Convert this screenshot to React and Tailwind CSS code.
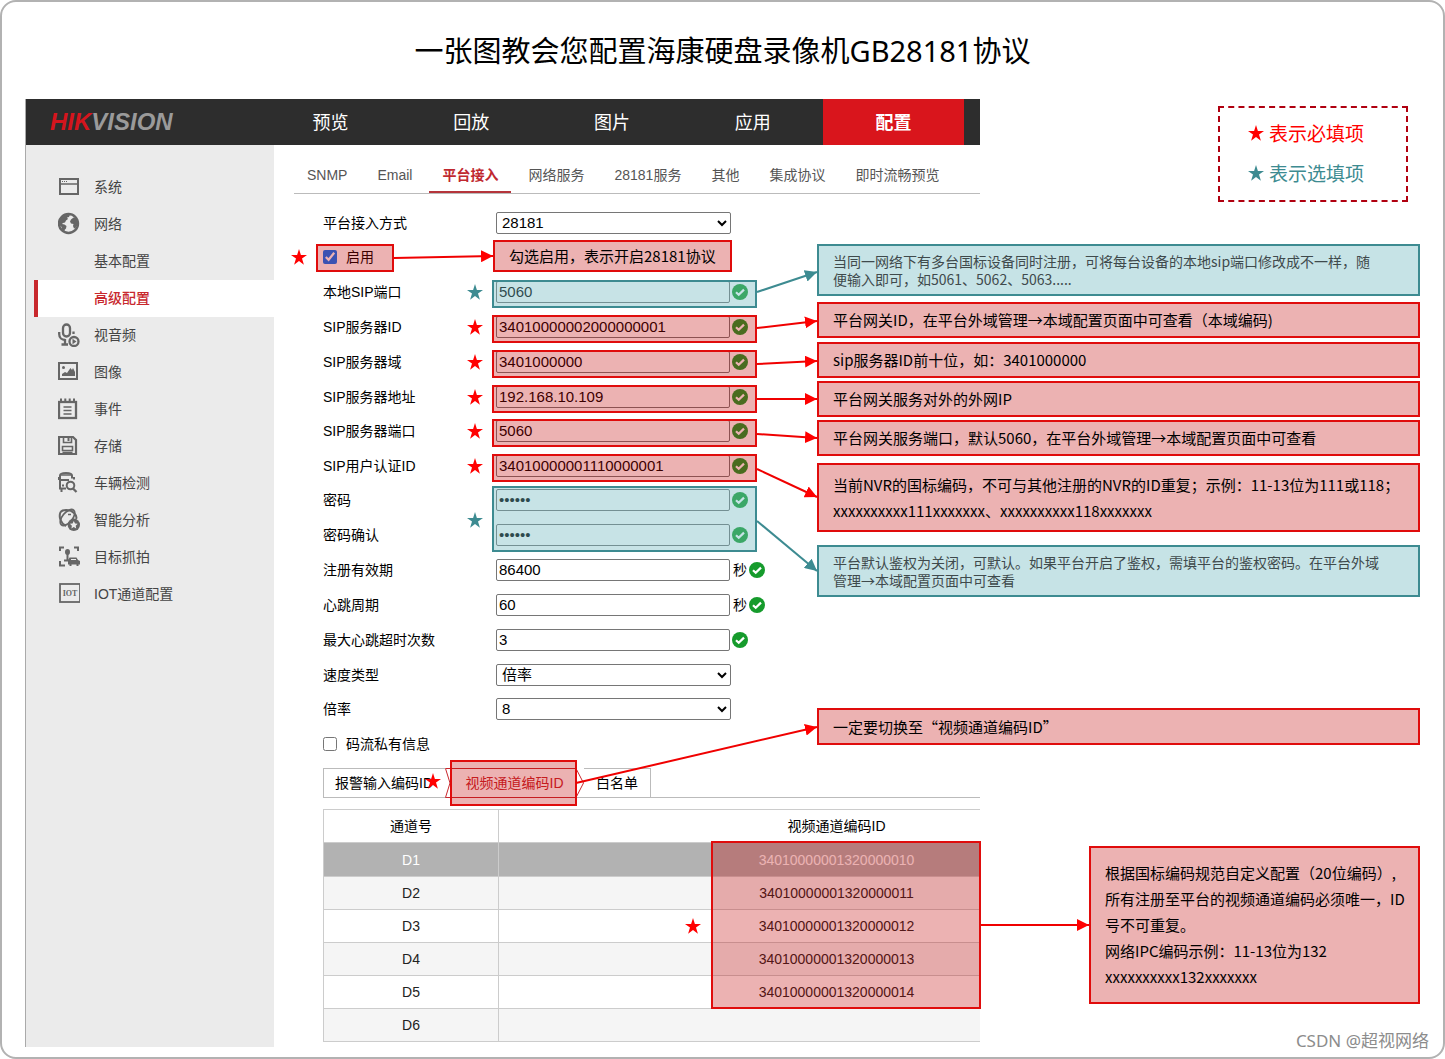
import React from "react";

const RED = "#f00000";
const TEAL = "#3d8b91";

const mainNav = ["预览", "回放", "图片", "应用", "配置"];

const subTabs = [
  "SNMP",
  "Email",
  "平台接入",
  "网络服务",
  "28181服务",
  "其他",
  "集成协议",
  "即时流畅预览",
];

const channels = [
  { name: "D1", code: "34010000001320000010" },
  { name: "D2", code: "34010000001320000011" },
  { name: "D3", code: "34010000001320000012" },
  { name: "D4", code: "34010000001320000013" },
  { name: "D5", code: "34010000001320000014" },
  { name: "D6", code: "" },
];

// lines between a highlighted field and its note
const arrows = [
  { from: [369, 159], to: [468, 157], kind: "required" },
  { from: [732, 193], to: [792, 173], kind: "optional" },
  { from: [732, 229], to: [792, 222], kind: "required" },
  { from: [732, 265], to: [792, 262], kind: "required" },
  { from: [732, 300], to: [792, 300], kind: "required" },
  { from: [732, 335], to: [792, 339], kind: "required" },
  { from: [732, 370], to: [792, 398], kind: "required" },
  { from: [732, 422], to: [792, 472], kind: "optional" },
  { from: [551, 684], to: [792, 628], kind: "required" },
  { from: [956, 826], to: [1064, 826], kind: "required" },
];

function Glyph({ children }) {
  return (
    <svg
      width="22"
      height="24"
      viewBox="0 0 22 24"
      fill="none"
      stroke="#666"
      strokeWidth="2"
      className="shrink-0"
      aria-hidden="true"
    >
      {children}
    </svg>
  );
}

const icons = {
  system: (
    <Glyph>
      <rect x="2" y="4" width="18" height="15" />
      <path d="M2 9h18" strokeWidth="1.5" />
      <path d="M4 6.500h1M6 6.500h1M8 6.500h1" strokeWidth="1" />
    </Glyph>
  ),
  network: (
    <Glyph>
      <circle cx="10.500" cy="11.500" r="9.500" strokeWidth="2.400" />
      <path
        d="M2 9C3 5 7 2 12 2.500l-1 2.500-2 .5 1 1.500-2 1.500-1 2-2 .5-1 1 2.500.5 2 1.500-.5 2.500-1.500 1.500v2l-2-1-1-4-2-2zM13 7.500l2.500-2 3 1L20 10l-.5 3-2 3-1.500.5-1-2.500.5-2-2.500-.5-1-2z"
        fill="#666"
        stroke="none"
      />
    </Glyph>
  ),
  media: (
    <Glyph>
      <rect x="5" y="1.500" width="7" height="12" rx="3.500" strokeWidth="2.300" />
      <path d="M1.200 9v2c0 4 2.800 6 6 6M15.500 8.500v2.500M7 16v5M3.500 21.500H10" strokeWidth="2.300" />
      <circle cx="16" cy="18.500" r="4.500" strokeWidth="2.300" />
      <path d="M14.500 15.800v5.400l4-2.700z" fill="#666" stroke="none" />
    </Glyph>
  ),
  image: (
    <Glyph>
      <rect x="1" y="3" width="18" height="16" />
      <circle cx="5.500" cy="7.500" r="1.500" fill="#666" stroke="none" />
      <path d="M4 16v-2l3-2 2 1 3.500-5 1.500 2 1-2 2 4v4z" fill="#666" stroke="none" />
    </Glyph>
  ),
  event: (
    <Glyph>
      <rect x="1" y="5" width="17" height="16" strokeWidth="2.300" />
      <path d="M3 1.500v4M7.300 1.500v4M11.700 1.500v4M16 1.500v4" />
      <path d="M5.500 10h8M5.500 13.500h8M5.500 17h8" strokeWidth="1.300" />
    </Glyph>
  ),
  storage: (
    <Glyph>
      <path d="M1 3h14l3 3v14H1z" strokeWidth="2.200" />
      <path d="M5.500 3v5.500h8V3" strokeWidth="1.600" />
      <path d="M10.500 4v3" />
      <path d="M4.500 16.500v-4h10v4zM4.500 18.500h10" strokeWidth="1.600" />
    </Glyph>
  ),
  vehicle: (
    <Glyph>
      <path d="M2 10V4.500C2 2.500 4 2 8 2s6 .5 6 2.500v3M2 9h9M2 9.500v8h6M3.500 18v3M1 6v3M16 6v2.500" strokeWidth="2" />
      <path d="M3 4h10" strokeWidth="1.500" />
      <path d="M4 14.500h2" />
      <circle cx="12.500" cy="14.500" r="3.800" strokeWidth="2" />
      <path d="M15 17.500l3.500 3.500" strokeWidth="2.300" />
    </Glyph>
  ),
  analysis: (
    <Glyph>
      <ellipse cx="9.500" cy="9.500" rx="9.500" ry="5" transform="rotate(-50 9.500 9.500)" strokeWidth="1.800" />
      <path d="M2.500 4c2.500-3 10-2.500 13.500 1s2.500 5 2 6M2.500 4c-2 5 0 11 5.500 14" strokeWidth="2" />
      <path d="M10 6.500h3" strokeWidth="1.500" />
      <circle cx="15.800" cy="16.800" r="6.200" fill="#666" stroke="none" />
      <path
        d="M15.800 13l1.200 2.500 2.700.3-2 1.900.5 2.700-2.400-1.300-2.400 1.300.5-2.700-2-1.900 2.700-.3z"
        fill="#ebebeb"
        stroke="none"
      />
    </Glyph>
  ),
  target: (
    <Glyph>
      <path d="M2 6V2.500h4M16 2.500h4V6M2 16v4.500h5" />
      <ellipse cx="9.500" cy="7" rx="2.500" ry="3" fill="#666" stroke="none" />
      <path d="M9.500 8v7M6 15.500h5" />
      <path
        d="M10 15.500l1.500-3h7l1.500 2.500 2 1v3.500h-1.500V21h-2v-1.500h-5V21h-2v-1.500H10z"
        fill="#666"
        stroke="none"
      />
      <path d="M13 14.500h5" stroke="#ebebeb" strokeWidth="1" />
    </Glyph>
  ),
  iot: (
    <Glyph>
      <rect x="2" y="2" width="20" height="18" strokeWidth="1.800" />
      <text
        x="12"
        y="14"
        textAnchor="middle"
        fontSize="8"
        fontWeight="700"
        fontFamily="Liberation Serif, serif"
        fill="#666"
        stroke="none"
      >
        IOT
      </text>
    </Glyph>
  ),
};

const menu = [
  { label: "系统", icon: "system" },
  { label: "网络", icon: "network" },
  { label: "基本配置" },
  { label: "高级配置", active: true },
  { label: "视音频", icon: "media" },
  { label: "图像", icon: "image" },
  { label: "事件", icon: "event" },
  { label: "存储", icon: "storage" },
  { label: "车辆检测", icon: "vehicle" },
  { label: "智能分析", icon: "analysis" },
  { label: "目标抓拍", icon: "target" },
  { label: "IOT通道配置", icon: "iot" },
];

function Star({ kind = "required", className = "" }) {
  return (
    <svg
      width="16"
      height="16"
      viewBox="0 0 16 16"
      fill={kind === "required" ? "#ff0000" : TEAL}
      className={`shrink-0 ${className}`}
      aria-hidden="true"
    >
      <path d="M8 0l1.900 5.900H16l-5 3.700 1.900 6.100L8 12l-4.900 3.700L5 9.600 0 5.900h6.100z" />
    </svg>
  );
}

function Check() {
  return (
    <svg width="16" height="16" viewBox="0 0 16 16" className="shrink-0" aria-hidden="true">
      <circle cx="8" cy="8" r="8" fill="#169b2c" />
      <path d="M4 8.300l2.700 2.500L12 5.600" fill="none" stroke="#fff" strokeWidth="2.200" />
    </svg>
  );
}

function Highlight({ kind = "required", className = "" }) {
  const tone =
    kind === "required"
      ? "border-[#e00c0c] bg-[#c00000]/30"
      : "border-[#3d8b91] bg-[#73bac1]/40";
  return (
    <div className={`pointer-events-none absolute border-2 ${tone} ${className}`} />
  );
}

function Note({ kind = "required", className = "", children }) {
  const tone =
    kind === "required"
      ? "border-[#e00c0c] bg-[#ecb2b2] text-[15px] leading-[26px] text-black"
      : "border-[#3d8b91] bg-[#c6e3e6] text-sm leading-[18px] text-[#3f4a4c]";
  return (
    <div
      className={`flex items-center border-2 pl-3.5 font-['Noto_Sans_CJK_SC',sans-serif] ${tone} ${className}`}
    >
      <p>{children}</p>
    </div>
  );
}

function Field({ id, label, star, children }) {
  return (
    <div className="relative flex h-[35px] items-center">
      <div className="flex w-[173px] shrink-0 items-center justify-between pr-[13px]">
        <label htmlFor={id} className="whitespace-nowrap">
          {label}
        </label>
        {star && <Star kind={star} />}
      </div>
      {children}
    </div>
  );
}

function TextField({ id, label, value, type = "text", star, unit }) {
  return (
    <Field id={id} label={label} star={star}>
      <input
        id={id}
        type={type}
        defaultValue={value}
        className="h-[22px] w-[234px] rounded-[2px] border border-[#767676] bg-white px-0.5 text-[15px] text-black"
      />
      <span className="ml-0.5 flex items-center gap-0.5">
        {unit && <span className="pl-px">{unit}</span>}
        <Check />
      </span>
      {star && <Highlight kind={star} className="top-1.5 left-[169px] h-7 w-[265px]" />}
    </Field>
  );
}

function SelectField({ id, label, value }) {
  return (
    <Field id={id} label={label}>
      <select
        id={id}
        className="h-[22px] w-[235px] rounded-[2px] border border-[#767676] bg-white px-px text-[15px] text-black"
      >
        <option>{value}</option>
      </select>
    </Field>
  );
}

function Header() {
  return (
    <header className="flex h-[46px] w-full max-w-[955px] items-stretch border-l border-[#aaa] bg-[#2d2d2d]">
      <div className="flex w-[234px] items-center pl-6 text-2xl font-bold italic">
        <span className="text-[#d5151d]">HIK</span>
        <span className="text-[#9a9a9a]">VISION</span>
      </div>
      <nav className="flex flex-1 pr-4">
        {mainNav.map((item) => (
          <a
            key={item}
            href="#"
            className={`flex flex-1 items-center justify-center pt-0.5 text-lg text-white ${
              item === "配置" ? "bg-[#d9151c] font-bold" : ""
            }`}
          >
            {item}
          </a>
        ))}
      </nav>
    </header>
  );
}

function Legend() {
  return (
    <div className="mt-[7px] mr-3 flex h-24 w-[190px] shrink-0 flex-col gap-3 border-2 border-dashed border-[#b00010] pt-[11px] pl-7 font-['Noto_Sans_CJK_SC',sans-serif] text-[19px] leading-7">
      <p className="flex items-center gap-[5px] text-[#ff0000]">
        <Star />
        表示必填项
      </p>
      <p className="flex items-center gap-[5px] text-[#3d8b91]">
        <Star kind="optional" />
        表示选填项
      </p>
    </div>
  );
}

function Sidebar() {
  return (
    <aside className="w-[249px] shrink-0 border-l border-[#aaa] bg-[#ebebeb] pt-6 pl-2">
      {menu.map(({ label, icon, active }) => (
        <a
          key={label}
          href="#"
          className={`flex h-[37px] items-center gap-3.5 pb-0.5 text-sm ${
            active
              ? "border-l-4 border-[#c8282d] bg-white pl-5 font-medium text-[#c8282d]"
              : "pl-6 text-[#444]"
          }`}
        >
          {icon ? icons[icon] : <span className="w-[22px]" />}
          {label}
        </a>
      ))}
    </aside>
  );
}

function SubTabs() {
  return (
    <nav className="ml-5 flex h-[49px] max-w-[686px] items-end gap-1 border-b border-[#bbb] text-sm">
      {subTabs.map((tab) => (
        <a
          key={tab}
          href="#"
          className={`flex h-[34px] items-center border-b-2 px-[13px] whitespace-nowrap ${
            tab === "平台接入"
              ? "border-[#b5343b] font-bold text-[#c0282f]"
              : "border-transparent text-[#555]"
          }`}
        >
          {tab}
        </a>
      ))}
    </nav>
  );
}

function PlatformForm() {
  return (
    <form className="w-[543px] shrink-0 pt-[11px] pl-[49px] text-sm text-black">
      <SelectField id="mode" label="平台接入方式" value="28181" />
      <div className="-mt-px">
        <div className="relative flex h-[35px] items-center">
          <Star className="absolute -left-8" />
          <input id="enable" type="checkbox" defaultChecked className="size-3.5" />
          <label htmlFor="enable" className="w-[147px] pl-[9px]">
            启用
          </label>
          <Highlight className="top-[5px] -left-[7px] h-7 w-[78px]" />
          <Note className="mb-0.5 ml-[9px] h-8 w-[239px] whitespace-nowrap">
            勾选启用，表示开启28181协议
          </Note>
        </div>
        <TextField id="localPort" label="本地SIP端口" value="5060" star="optional" />
        <TextField id="serverId" label="SIP服务器ID" value="34010000002000000001" star="required" />
        <TextField id="domain" label="SIP服务器域" value="3401000000" star="required" />
        <TextField id="address" label="SIP服务器地址" value="192.168.10.109" star="required" />
      </div>
      <div className="-mt-px">
        <TextField id="serverPort" label="SIP服务器端口" value="5060" star="required" />
        <TextField id="userId" label="SIP用户认证ID" value="34010000001110000001" star="required" />
      </div>
      <div className="relative -mt-px">
        <TextField id="password" type="password" label="密码" value="123456" />
        <TextField id="confirm" type="password" label="密码确认" value="123456" />
        <TextField id="expires" label="注册有效期" value="86400" unit="秒" />
        <TextField id="heartbeat" label="心跳周期" value="60" unit="秒" />
        <TextField id="timeouts" label="最大心跳超时次数" value="3" />
        <SelectField id="speedType" label="速度类型" value="倍率" />
        <Star kind="optional" className="absolute top-[30px] left-36" />
        <Highlight kind="optional" className="top-1 left-[169px] h-[66px] w-[265px]" />
      </div>
      <div className="-mt-px">
        <SelectField id="rate" label="倍率" value="8" />
        <div className="flex h-[35px] items-center">
          <input id="private" type="checkbox" className="size-3.5" />
          <label htmlFor="private" className="pl-[9px]">
            码流私有信息
          </label>
        </div>
      </div>
    </form>
  );
}

function Notes() {
  return (
    <div className="flex flex-1 flex-col gap-[3px] pt-[50px]">
      <Note kind="optional" className="min-h-[52px]">
        当同一网络下有多台国标设备同时注册，可将每台设备的本地sip端口修改成不一样，随
        <br />
        便输入即可，如5061、5062、5063.....
      </Note>
      <Note className="mt-[3px] min-h-9">
        平台网关ID，在平台外域管理→本域配置页面中可查看（本域编码)
      </Note>
      <Note className="mt-px min-h-9">sip服务器ID前十位，如：3401000000</Note>
      <Note className="min-h-9">平台网关服务对外的外网IP</Note>
      <Note className="min-h-9">
        平台网关服务端口，默认5060，在平台外域管理→本域配置页面中可查看
      </Note>
      <Note className="mt-1 min-h-[69px]">
        当前NVR的国标编码，不可与其他注册的NVR的ID重复；示例：11-13位为111或118；
        <br />
        xxxxxxxxxx111xxxxxxx、xxxxxxxxxx118xxxxxxx
      </Note>
      <Note kind="optional" className="mt-2.5 min-h-[52px]">
        平台默认鉴权为关闭，可默认。如果平台开启了鉴权，需填平台的鉴权密码。在平台外域
        <br />
        管理→本域配置页面中可查看
      </Note>
      <Note className="mt-[108px] min-h-[37px]">一定要切换至“视频通道编码ID”</Note>
    </div>
  );
}

function CodeTabs() {
  return (
    <div className="relative mt-[7px] flex h-[30px] border-b border-[#bbb] text-sm text-black">
      <button type="button" className="w-[122px] border-t border-l border-[#bbb] pl-[11px] text-left">
        报警输入编码ID
      </button>
      <button type="button" className="relative w-[139px] text-[#c8282d]">
        <svg
          width="139"
          height="30"
          viewBox="0 0 139 30"
          fill="none"
          stroke="#c8282d"
          className="absolute top-0 left-0"
          aria-hidden="true"
        >
          <path d="M.5.5H131l7.500 14.500L131 29.500H.5L5 15z" />
        </svg>
        视频通道编码ID
      </button>
      <button type="button" className="w-[67px] border-t border-r border-[#bbb] text-center">
        白名单
      </button>
      <Highlight className="-top-2 left-[127px] h-[46px] w-[127px]" />
      <Star className="absolute top-[5px] left-[102px]" />
    </div>
  );
}

function ChannelTable() {
  return (
    <div className="relative mt-[11px]">
      <div className="overflow-hidden">
        <table className="w-[852px] table-fixed border-collapse text-center text-sm text-[#222]">
          <thead>
            <tr className="h-[33px] text-black">
              <th scope="col" className="w-[175px] border border-[#ccc] font-normal">
                通道号
              </th>
              <th scope="col" className="border border-[#ccc] font-normal">
                视频通道编码ID
              </th>
            </tr>
          </thead>
          <tbody>
            {channels.map(({ name, code }) => (
              <tr
                key={name}
                className={
                  name === "D1"
                    ? "h-[34px] bg-[#b2b2b2] text-white"
                    : "h-[33px] even:bg-[#f5f5f5]"
                }
              >
                <td className="border border-[#ccc]">{name}</td>
                <td className="border border-[#ccc]">{code}</td>
              </tr>
            ))}
          </tbody>
        </table>
      </div>
      <Star className="absolute top-[109px] left-[362px]" />
      <Highlight className="top-8 left-[388px] h-[168px] w-[270px]" />
    </div>
  );
}

function Arrows() {
  return (
    <svg
      className="pointer-events-none absolute inset-0 size-full overflow-visible"
      fill="none"
      strokeWidth="2"
      aria-hidden="true"
    >
      <defs>
        {[
          ["required", "#ff0000"],
          ["optional", TEAL],
        ].map(([kind, color]) => (
          <marker
            key={kind}
            id={`head-${kind}`}
            markerUnits="userSpaceOnUse"
            markerWidth="12"
            markerHeight="12"
            refX="12"
            refY="6"
            orient="auto"
          >
            <path d="M0 0l12 6-12 6z" fill={color} />
          </marker>
        ))}
      </defs>
      {arrows.map(({ from, to, kind }) => (
        <line
          key={`${from}-${to}`}
          x1={from[0]}
          y1={from[1]}
          x2={to[0]}
          y2={to[1]}
          stroke={kind === "required" ? RED : TEAL}
          markerEnd={`url(#head-${kind})`}
        />
      ))}
    </svg>
  );
}

export default function App() {
  return (
    <div className="relative min-h-screen rounded-2xl border-2 border-[#b2b2b2] bg-white px-[23px] pb-2.5 font-['Liberation_Sans','Noto_Sans_CJK_SC',sans-serif]">
      <h1 className="flex h-[97px] items-center justify-center font-['Noto_Sans','Noto_Sans_CJK_SC',sans-serif] text-[29px] text-black">
        一张图教会您配置海康硬盘录像机GB28181协议
      </h1>
      <main className="relative">
        <div className="flex h-[46px] items-start justify-between">
          <Header />
          <Legend />
        </div>
        <div className="flex">
          <Sidebar />
          <div className="min-w-0 flex-1 pb-[5px]">
            <SubTabs />
            <div className="flex">
              <PlatformForm />
              <Notes />
            </div>
            <div className="flex items-start pl-[49px]">
              <div className="w-[657px] shrink-0">
                <CodeTabs />
                <ChannelTable />
              </div>
              <Note className="mt-[85px] ml-[109px] min-h-[158px] flex-1">
                根据国标编码规范自定义配置（20位编码）,
                <br />
                所有注册至平台的视频通道编码必须唯一，ID
                <br />
                号不可重复。
                <br />
                网络IPC编码示例：11-13位为132
                <br />
                xxxxxxxxxx132xxxxxxx
              </Note>
            </div>
          </div>
        </div>
        <Arrows />
      </main>
      <span className="absolute right-3.5 bottom-1 font-['Noto_Sans','Noto_Sans_CJK_SC',sans-serif] text-[17px] leading-6 text-[#8c8c8c]">
        CSDN @超视网络
      </span>
    </div>
  );
}
